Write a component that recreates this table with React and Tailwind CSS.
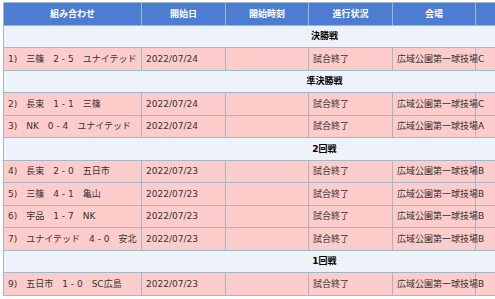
import React from "react";

const rows = [
  { section: "決勝戦" },
  { m: "1)\u3000三篠\u30002 - 5\u3000ユナイテッド", d: "2022/07/24", v: "広域公園第一球技場C" },
  { section: "準決勝戦" },
  { m: "2)\u3000長束\u30001 - 1\u3000三篠", d: "2022/07/24", v: "広域公園第一球技場C" },
  { m: "3)\u3000NK\u30000 - 4\u3000ユナイテッド", d: "2022/07/24", v: "広域公園第一球技場A" },
  { section: "2回戦" },
  { m: "4)\u3000長束\u30002 - 0\u3000五日市", d: "2022/07/23", v: "広域公園第一球技場B" },
  { m: "5)\u3000三篠\u30004 - 1\u3000亀山", d: "2022/07/23", v: "広域公園第一球技場B" },
  { m: "6)\u3000宇品\u30001 - 7\u3000NK", d: "2022/07/23", v: "広域公園第一球技場B" },
  { m: "7)\u3000ユナイテッド\u30004 - 0\u3000安北", d: "2022/07/23", v: "広域公園第一球技場B" },
  { section: "1回戦" },
  { m: "9)\u3000五日市\u30001 - 0\u3000SC広島", d: "2022/07/23", v: "広域公園第一球技場B" },
];

const headers = ["組み合わせ", "開始日", "開始時刻", "進行状況", "会場", ""];

export default function App() {
  const td = "border border-[#a3b6ca] px-[4px] py-0 h-[22.5px] whitespace-nowrap overflow-visible text-left align-middle";
  return (
    <div
      className="w-[495px] h-[299px] overflow-hidden bg-white pl-[3px] pt-[2px]"
      style={{ fontFamily: '"DejaVu Sans", "Noto Sans CJK JP", sans-serif' }}
    >
      <table className="border-collapse table-fixed w-[642px] text-[9px] leading-[12px]">
        <colgroup>
          <col className="w-[138px]" />
          <col className="w-[84px]" />
          <col className="w-[83px]" />
          <col className="w-[84px]" />
          <col className="w-[83px]" />
          <col className="w-[170px]" />
        </colgroup>
        <thead>
          <tr className="bg-[#4d7dd2]">
            {headers.map((h, i) => (
              <th
                key={i}
                className="border border-[#a3b6ca] h-[22.5px] px-[4px] py-0 text-center text-white font-bold whitespace-nowrap"
              >
                {h}
              </th>
            ))}
          </tr>
        </thead>
        <tbody>
          {rows.map((r, i) =>
            r.section ? (
              <tr key={i} className="bg-[#eef3fb]">
                <td colSpan={6} className="border border-[#a3b6ca] h-[22.5px] py-0 text-center font-bold text-black">
                  {r.section}
                </td>
              </tr>
            ) : (
              <tr key={i} className="bg-[#ffcccc] text-[#333]">
                <td className={td}>{r.m}</td>
                <td className={td}>{r.d}</td>
                <td className={td}></td>
                <td className={td}>試合終了</td>
                <td className={td}>{r.v}</td>
                <td className={td}></td>
              </tr>
            )
          )}
        </tbody>
      </table>
    </div>
  );
}
